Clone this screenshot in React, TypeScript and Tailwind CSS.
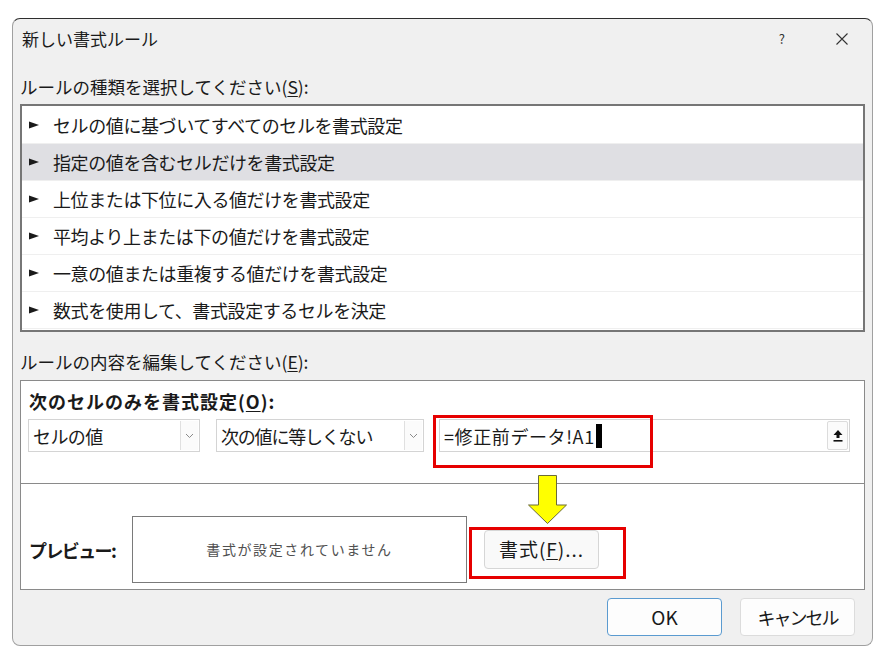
import React from "react";

const font = { fontFamily: '"Noto Sans CJK JP", "Noto Sans", sans-serif' };

const rules = [
  "セルの値に基づいてすべてのセルを書式設定",
  "指定の値を含むセルだけを書式設定",
  "上位または下位に入る値だけを書式設定",
  "平均より上または下の値だけを書式設定",
  "一意の値または重複する値だけを書式設定",
  "数式を使用して、書式設定するセルを決定",
];

function Pointer() {
  return (
    <svg width="10" height="8" viewBox="0 0 10 8" className="shrink-0">
      <path d="M0 0.5 L10 4 L0 7.5 Z" fill="#1a1a1a" />
    </svg>
  );
}

function Chevron() {
  return (
    <svg width="9" height="6" viewBox="0 0 9 6">
      <path d="M1 1 L4.5 4.5 L8 1" fill="none" stroke="#8a8a8a" strokeWidth="1" />
    </svg>
  );
}

function Combo({ label, width, tracking }: { label: string; width: string; tracking: string }) {
  return (
    <div className={`flex h-[33px] items-center border border-[#d4d4d4] bg-white ${width}`}>
      <span className={`flex-1 pl-[4px] text-[18px] leading-none text-[#1a1a1a] ${tracking}`}>{label}</span>
      <div className="mr-[1px] flex h-[29px] w-[18px] items-center justify-center border-l border-[#e0e0e0] bg-[#fbfbfb]">
        <Chevron />
      </div>
    </div>
  );
}

export default function App() {
  return (
    <div className="relative h-[651px] w-[879px] overflow-hidden bg-white" style={font}>
      <div className="pl-[12px] pt-[18px]">
        <div className="flex h-[628px] w-[861px] flex-col rounded-[8px] border border-[#a0a0a0] border-t-[#2e2e2e] bg-[#f0f0f0]">
          {/* title bar */}
          <div className="flex h-[40px] items-center pl-[9px]">
            <span className="flex-1 text-[17px] text-[#1a1a1a]">新しい書式ルール</span>
            <span className="mr-[51px] text-[13px] text-[#333]">?</span>
            <svg width="12" height="12" viewBox="0 0 12 12" className="mr-[24px]">
              <path d="M0.5 0.5 L11.5 11.5 M11.5 0.5 L0.5 11.5" stroke="#333" strokeWidth="1.1" />
            </svg>
          </div>

          <div className="flex flex-col px-[7px]">
            <div className="mt-[16px] h-[24px] text-[17.5px] leading-[24px] text-[#1a1a1a]">
              ルールの種類を選択してください(<span className="underline underline-offset-2">S</span>):
            </div>

            {/* rule type list */}
            <div className="mt-[5px] h-[228px] border-2 border-[#767676] bg-white pt-[1px]">
              {rules.map((r, i) => (
                <div
                  key={r}
                  className={`flex h-[37px] items-center gap-[14px] border-b border-[#efefef] pl-[7px] text-[18px] leading-none text-[#1a1a1a] ${
                    i === 1 ? "bg-[#dfdfe3]" : ""
                  }`}
                >
                  <Pointer />
                  <span className="tracking-[-0.4px]">{r}</span>
                </div>
              ))}
            </div>

            <div className="mt-[18px] h-[24px] text-[17.5px] leading-[24px] text-[#1a1a1a]">
              ルールの内容を編集してください(<span className="underline underline-offset-2">E</span>):
            </div>

            {/* rule description */}
            <div className="mt-[6px] flex h-[210px] flex-col border border-[#8a8a8a] bg-white">
              <div className="mt-[8px] h-[24px] pl-[8px] text-[18px] font-bold leading-[24px] tracking-[1px] text-[#1a1a1a]">
                次のセルのみを書式設定(<span className="underline underline-offset-2">O</span>):
              </div>
              <div className="mt-[6px] flex items-center pl-[7px]">
                <Combo label="セルの値" width="w-[172px]" tracking="tracking-[-0.6px]" />
                <div className="w-[16px]" />
                <Combo label="次の値に等しくない" width="w-[208px]" tracking="tracking-[-1.2px]" />
                <div className="w-[15px]" />
                <div className="flex h-[33px] w-[411px] items-center border border-[#d4d4d4] bg-white pl-[4px]">
                  <span className="text-[18px] leading-none tracking-[0.6px] text-[#1a1a1a]">=修正前データ!A1</span>
                  <span className="ml-[1px] h-[24px] w-[6px] bg-black" />
                  <div className="flex-1" />
                  <div className="mr-[1px] flex h-[29px] w-[21px] items-center justify-center rounded-[2px] border border-[#dcdcdc] bg-[#fbfbfb]">
                    <svg width="10" height="13" viewBox="0 0 10 13">
                      <path d="M5 1 L9.5 6 L6.5 6 L6.5 9 L3.5 9 L3.5 6 L0.5 6 Z" fill="#111" />
                      <rect x="0.5" y="11" width="9" height="1.6" fill="#111" />
                    </svg>
                  </div>
                </div>
              </div>

              <div className="mt-[31px] h-px bg-[#8a8a8a]" />

              <div className="mt-[32px] flex items-center pl-[8px]">
                <span className="w-[103px] text-[18px] font-bold leading-none tracking-[-1.6px] text-[#1a1a1a]">プレビュー:</span>
                <div className="flex h-[67px] w-[335px] items-center justify-center border border-[#7a7a7a] bg-white">
                  <span className="text-[14px] tracking-[1.6px] text-[#505050]">書式が設定されていません</span>
                </div>
                <div className="w-[17px]" />
                <div className="flex h-[39px] w-[115px] items-center justify-center rounded-[4px] border border-[#d6d6d6] bg-[#f9f9f9] text-[19px] tracking-[1px] text-[#1a1a1a]">
                  書式(<span className="underline underline-offset-2">F</span>)...
                </div>
              </div>
            </div>

            {/* dialog buttons */}
            <div className="mt-[8px] flex justify-end gap-[18px] pr-[10px]">
              <div className="flex h-[38px] w-[115px] items-center justify-center rounded-[4px] border border-[#5b9bd0] bg-[#fdfdfd] text-[19px] text-[#1a1a1a]">
                OK
              </div>
              <div className="flex h-[38px] w-[115px] items-center justify-center rounded-[4px] border border-[#dcdcdc] bg-[#fdfdfd] text-[18px] tracking-[-2px] text-[#1a1a1a]">
                キャンセル
              </div>
            </div>
          </div>
        </div>
      </div>

      {/* callout marks */}
      <div className="absolute left-[433px] top-[415px] h-[53px] w-[220px] border-[3px] border-[#e60000]" />
      <div className="absolute left-[469px] top-[527px] h-[52px] w-[157px] border-[3px] border-[#e60000]" />
      <svg className="absolute left-[527px] top-[475px]" width="41" height="50" viewBox="0 0 41 50">
        <path d="M11.5 0.5 L29.5 0.5 L29.5 30 L39.5 30 L20.5 48.5 L1.5 30 L11.5 30 Z" fill="#ffff00" stroke="#6b6b3a" strokeWidth="1" />
      </svg>
    </div>
  );
}
